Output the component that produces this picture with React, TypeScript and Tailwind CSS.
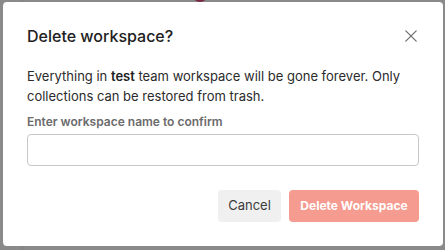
import React from "react";

export default function App() {
  return (
    <div className="relative w-[445px] h-[250px] overflow-hidden bg-[#8a8a8a] font-['Inter','Noto_Sans',sans-serif]">
      {/* dimmed page content peeking behind the overlay */}
      <div className="absolute left-[22px] top-0 h-full w-px bg-[#7d7d7d]" />
      <div className="absolute left-[192px] top-[-14px] h-[16px] w-[16px] rounded-full bg-[#7a2a45]" />
      <div className="absolute left-[221px] top-[-11px] text-[13px] leading-[13px] text-[#4a4a4a]">
        Crash Harmon
      </div>

      <div className="absolute left-[3px] top-[2px] flex h-[244px] w-[440px] flex-col rounded-[4px] bg-white px-6 pt-[22px] pb-6">
        <div className="flex items-center justify-between">
          <h2 className="text-[16px] leading-6 font-medium text-[#212121]">Delete workspace?</h2>
          <button className="flex h-4 w-4 items-center justify-center text-[#6b6b6b]">
            <svg width="12" height="12" viewBox="0 0 12 12" fill="none" stroke="currentColor" strokeWidth="1.2" strokeLinecap="round">
              <path d="M0.8 0.8l10.4 10.4M11.2 0.8L0.8 11.2" />
            </svg>
          </button>
        </div>
        <p className="mt-[18px] text-[13px] leading-5 text-[#2b2b2b]">
          Everything in <span className="font-semibold text-[#212121]">test</span> team workspace will be gone forever. Only collections can be restored from trash.
        </p>
        <label className="mt-[6px] text-[12px] leading-5 font-semibold text-[#6b6b6b]">Enter workspace name to confirm</label>
        <input className="mt-[2px] h-8 w-full rounded-[4px] border border-[#c7c7c7] px-2 text-[13px] outline-none" />
        <div className="mt-6 flex justify-end gap-2">
          <button className="h-8 w-[63px] rounded-[4px] bg-[#f0f0f0] text-[13px] text-[#3b3b3b]">Cancel</button>
          <button className="h-8 w-[130px] rounded-[4px] bg-[#f59b8f] text-[12px] font-bold text-white">Delete Workspace</button>
        </div>
      </div>
    </div>
  );
}
